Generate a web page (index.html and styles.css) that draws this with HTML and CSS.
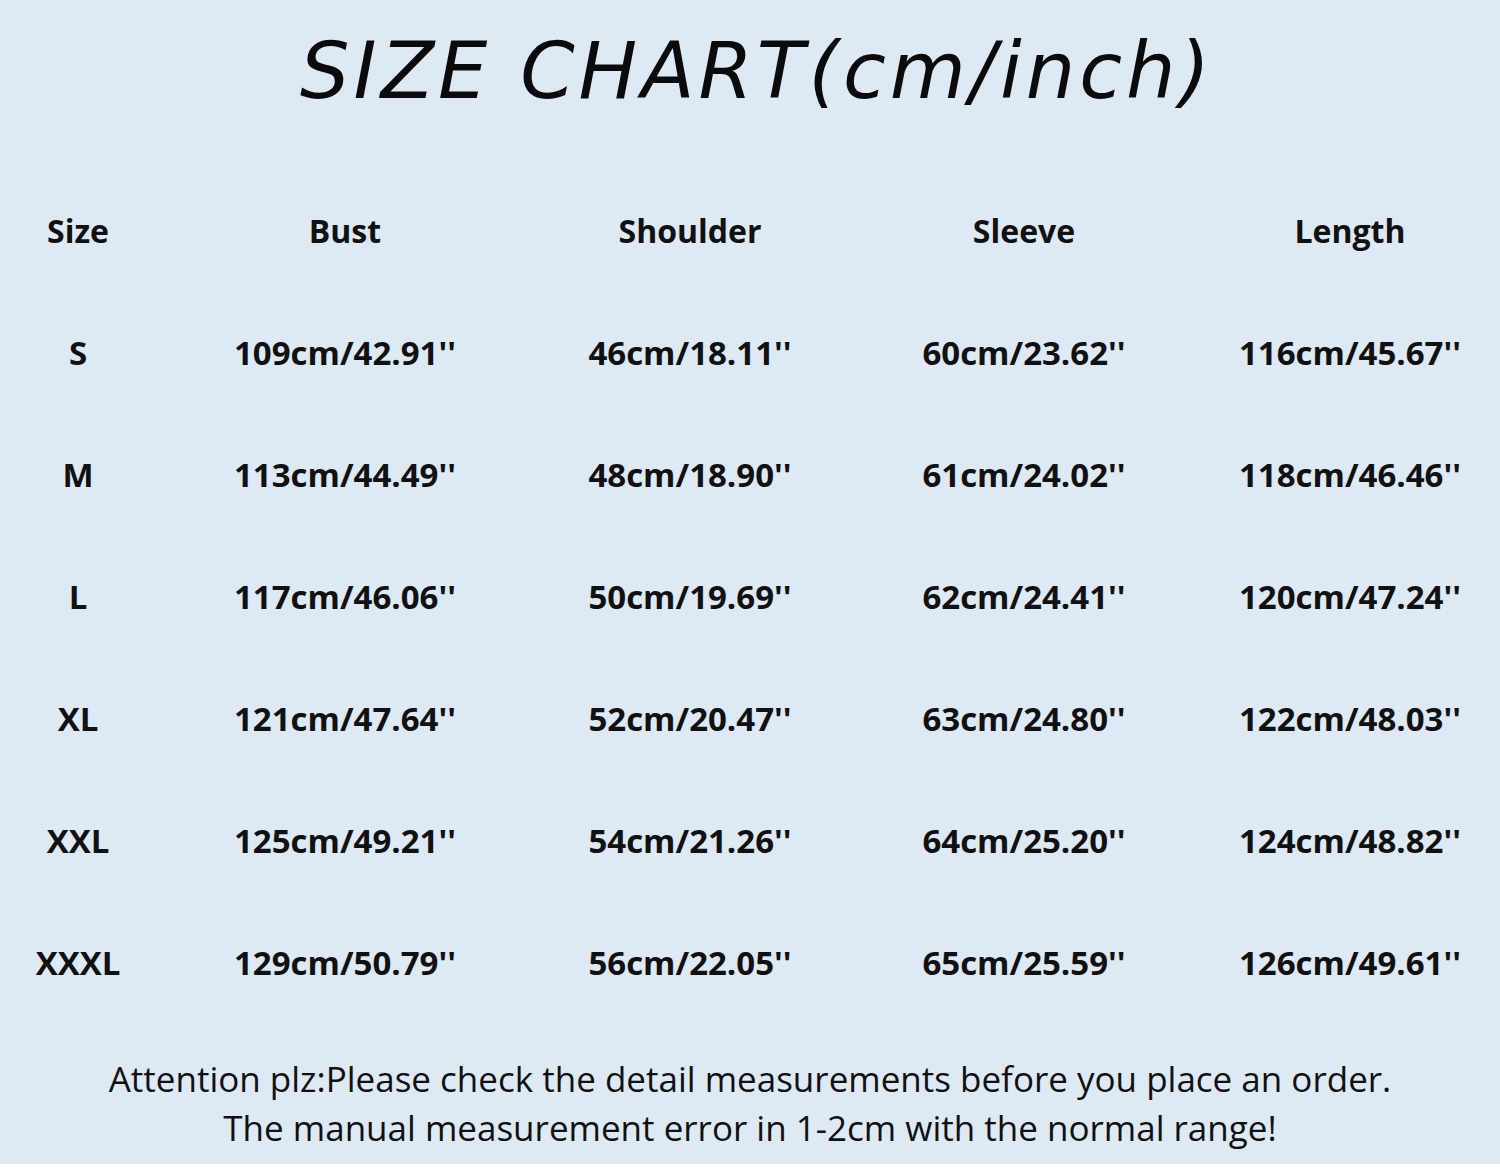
FILE: index.html
```html
<!DOCTYPE html>
<html>
<head>
<meta charset="utf-8">
<link rel="stylesheet" href="styles.css">
</head>
<body>
<div class="sheet">
  <h1 class="title">SIZE CHART(cm/inch)</h1>
  <div class="chart">
    <div class="cell head">Size</div><div class="cell head">Bust</div><div class="cell head">Shoulder</div><div class="cell head">Sleeve</div><div class="cell head">Length</div>
    <div class="cell">S</div><div class="cell">109cm/42.91''</div><div class="cell">46cm/18.11''</div><div class="cell">60cm/23.62''</div><div class="cell">116cm/45.67''</div>
    <div class="cell">M</div><div class="cell">113cm/44.49''</div><div class="cell">48cm/18.90''</div><div class="cell">61cm/24.02''</div><div class="cell">118cm/46.46''</div>
    <div class="cell">L</div><div class="cell">117cm/46.06''</div><div class="cell">50cm/19.69''</div><div class="cell">62cm/24.41''</div><div class="cell">120cm/47.24''</div>
    <div class="cell">XL</div><div class="cell">121cm/47.64''</div><div class="cell">52cm/20.47''</div><div class="cell">63cm/24.80''</div><div class="cell">122cm/48.03''</div>
    <div class="cell">XXL</div><div class="cell">125cm/49.21''</div><div class="cell">54cm/21.26''</div><div class="cell">64cm/25.20''</div><div class="cell">124cm/48.82''</div>
    <div class="cell">XXXL</div><div class="cell">129cm/50.79''</div><div class="cell">56cm/22.05''</div><div class="cell">65cm/25.59''</div><div class="cell">126cm/49.61''</div>
  </div>
  <div class="note">
    <p class="line">Attention plz:Please check the detail measurements before you place an order.</p>
    <p class="line">The manual measurement error in 1-2cm with the normal range!</p>
  </div>
</div>
</body>
</html>
```

FILE: styles.css
```css
html, body {
  margin: 0;
  padding: 0;
  background: #ffffff;
}
.sheet {
  width: 1500px;
  height: 1164px;
  background: #dde9f4;
  box-sizing: border-box;
  display: flex;
  flex-direction: column;
  color: #111111;
}
.title {
  margin: 0;
  height: 171px;
  padding-top: 21px;
  padding-left: 14px;
  box-sizing: border-box;
  text-align: center;
  font-family: "DejaVu Sans", "Lato", sans-serif;
  font-style: oblique;
  font-weight: 400;
  font-size: 78px;
  line-height: 100px;
  letter-spacing: 4px;
  color: #0b0b0b;
}
.chart {
  display: grid;
  grid-template-columns: 156px 378px 312px 356px 296px;
  grid-template-rows: 120px repeat(6, 122px);
  height: 852px;
}
.cell {
  display: flex;
  align-items: center;
  justify-content: center;
  font-family: "Open Sans", "DejaVu Sans", sans-serif;
  font-weight: 700;
  font-size: 33px;
  line-height: 1;
  color: #111111;
}
.head {
  font-size: 32px;
}
.note {
  flex: 1;
  display: flex;
  flex-direction: column;
  align-items: center;
  padding-top: 31px;
}
.line {
  margin: 0;
  font-family: "Open Sans", "Noto Sans", sans-serif;
  font-size: 35px;
  line-height: 49px;
  letter-spacing: 0;
  color: #111111;
}
```
